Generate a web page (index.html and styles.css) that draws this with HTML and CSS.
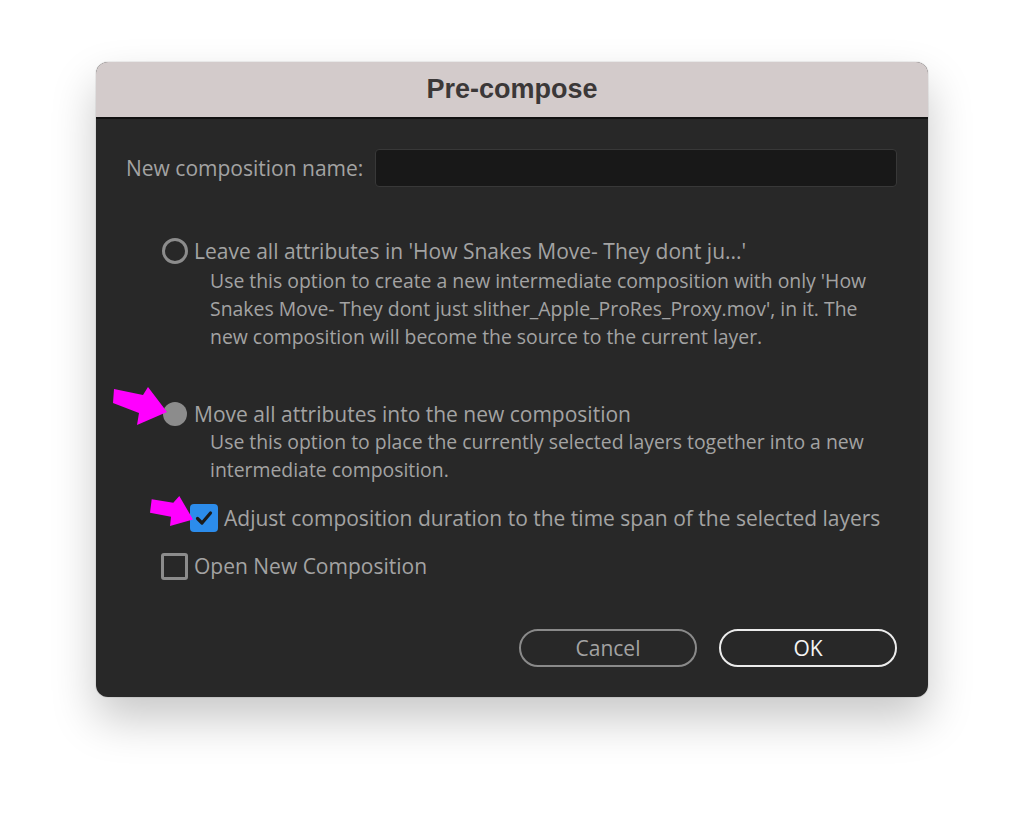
FILE: index.html
```
<!DOCTYPE html>
<html>
<head>
<meta charset="utf-8">
<link rel="stylesheet" href="styles.css">
</head>
<body>
<div class="dialog">
  <div class="titlebar">Pre-compose</div>
  <div class="content">
    <div class="name-row">
      <span class="label">New composition name:</span>
      <div class="input"></div>
    </div>

    <div class="option first">
      <div class="opt-line">
        <span class="radio"></span>
        <span class="text">Leave all attributes in 'How Snakes Move- They dont ju...'</span>
      </div>
      <div class="desc gap">Use this option to create a new intermediate composition with only 'How<br>Snakes Move- They dont just slither_Apple_ProRes_Proxy.mov', in it. The<br>new composition will become the source to the current layer.</div>
    </div>

    <div class="option second">
      <div class="opt-line">
        <span class="radio filled"></span>
        <span class="text">Move all attributes into the new composition</span>
      </div>
      <div class="desc">Use this option to place the currently selected layers together into a new<br>intermediate composition.</div>
      <div class="opt-line check-row indented">
        <span class="checkbox checked"><svg viewBox="0 0 28 28" width="28" height="28"><path d="M7.5 14.5 L12 19 L20.5 9" fill="none" stroke="#1b1b1b" stroke-width="3.2" stroke-linecap="round" stroke-linejoin="round"/></svg></span>
        <span class="text">Adjust composition duration to the time span of the selected layers</span>
      </div>
    </div>

    <div class="opt-line check-row open-row">
      <span class="checkbox"></span>
      <span class="text">Open New Composition</span>
    </div>

    <div class="buttons">
      <div class="btn cancel">Cancel</div>
      <div class="btn ok">OK</div>
    </div>
  </div>
</div>

<svg class="arrow arrow1" width="80" height="50" viewBox="0 0 80 50"><polygon points="14,9 43,15 48,7 67,32 37,45 39,33 13,23" fill="#ff00ff"/></svg>
<svg class="arrow arrow2" width="60" height="40" viewBox="0 0 60 40"><polygon points="11.7,9.3 33.3,12.7 39.3,6 53,29.5 30,36 31,26.7 10,22.7" fill="#ff00ff"/></svg>
</body>
</html>
```

FILE: styles.css
```
html, body {
  margin: 0;
  padding: 0;
  background: #ffffff;
  width: 1024px;
  height: 832px;
  overflow: hidden;
}

body {
  position: relative;
  font-family: "Open Sans", "Noto Sans", sans-serif;
}

.dialog {
  margin: 62px 0 0 96px;
  width: 832px;
  border-radius: 12px;
  overflow: hidden;
  background: #282828;
  box-shadow: 0 22px 45px rgba(0, 0, 0, 0.22), 0 0 0 1px rgba(0, 0, 0, 0.06);
}

.titlebar {
  height: 55px;
  background: #d3cbcb;
  border-bottom: 2px solid #121212;
  display: flex;
  align-items: center;
  justify-content: center;
  font-family: "Liberation Sans", Arial, sans-serif;
  font-weight: bold;
  font-size: 27px;
  color: #3b3838;
}

.content {
  padding: 30px 31px 30px 30px;
  color: #a3a3a3;
  font-size: 21px;
}

.name-row {
  display: flex;
  align-items: center;
  gap: 12px;
  height: 38px;
}

.label {
  color: #a3a3a3;
  white-space: nowrap;
}

.input {
  flex: 1;
  height: 36px;
  background: #181818;
  border: 1px solid #383838;
  border-radius: 4px;
}

.option {
  padding-left: 36px;
}

.option.first {
  margin-top: 50px;
}

.option.second {
  margin-top: 49px;
}

.opt-line {
  display: flex;
  align-items: center;
  height: 28px;
  line-height: 28px;
  white-space: nowrap;
}

.radio {
  box-sizing: border-box;
  width: 26px;
  height: 26px;
  border-radius: 50%;
  border: 3px solid #8c8c8c;
  margin-right: 6px;
  flex: none;
}

.radio.filled {
  border: none;
  background: #8c8c8c;
  width: 24px;
  height: 24px;
  margin-left: 1px;
  margin-right: 7px;
}

.desc {
  padding-left: 48px;
  line-height: 28px;
  font-size: 19.4px;
  white-space: nowrap;
}

.desc.gap {
  margin-top: 2px;
}

.check-row {
  margin-top: 20px;
}

.indented {
  padding-left: 28px;
}

.checkbox {
  box-sizing: border-box;
  width: 27px;
  height: 27px;
  border: 3px solid #8c8c8c;
  border-radius: 3px;
  margin-right: 6px;
  flex: none;
  display: flex;
  align-items: center;
  justify-content: center;
}

.checkbox.checked {
  width: 28px;
  height: 28px;
  border: none;
  background: #2c8ceb;
  border-radius: 4px;
}

.open-row {
  padding-left: 35px;
}

.buttons {
  display: flex;
  justify-content: flex-end;
  gap: 22px;
  margin-top: 49px;
}

.btn {
  box-sizing: border-box;
  width: 178px;
  height: 38px;
  border-radius: 19px;
  display: flex;
  align-items: center;
  justify-content: center;
  font-size: 21px;
}

.btn.cancel {
  border: 2px solid #8a8a8a;
  color: #a3a3a3;
}

.btn.ok {
  border: 2px solid #ececec;
  color: #f4f4f4;
}

.arrow {
  position: absolute;
}

.arrow1 {
  left: 100px;
  top: 380px;
}

.arrow2 {
  left: 140px;
  top: 490px;
}
```
